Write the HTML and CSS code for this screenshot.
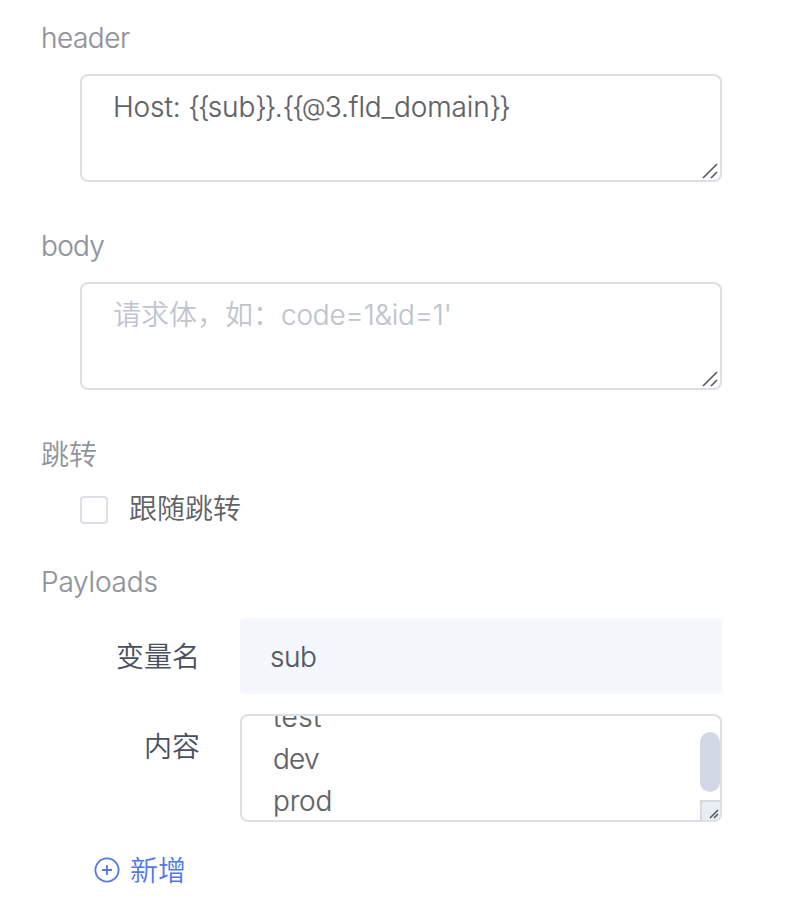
FILE: index.html
```html
<!DOCTYPE html>
<html lang="zh-CN">
<head>
<meta charset="utf-8">
<title>Payloads</title>
<link rel="stylesheet" href="styles.css">
</head>
<body>
<main class="form">
  <section class="group">
    <h2 class="title"><span class="t-header">header</span></h2>
    <div class="area"><span class="t-host">Host: <span class="brace">{{</span>sub<span class="brace">}}</span>.<span class="brace">{{</span><span class="at">@</span>3.fld_domain<span class="brace">}}</span></span>
      <svg class="grip" width="16" height="16" viewBox="0 0 16 16"><path d="M1 15L15 1M9 15L15 9"/></svg>
    </div>
  </section>
  <section class="group">
    <h2 class="title"><span class="t-body">body</span></h2>
    <div class="area placeholder"><span class="cjk">请求体，如：</span><span class="t-code">code=1&amp;id=1'</span>
      <svg class="grip" width="16" height="16" viewBox="0 0 16 16"><path d="M1 15L15 1M9 15L15 9"/></svg>
    </div>
  </section>
  <section class="group group-check">
    <h2 class="title cjk">跳转</h2>
    <label class="check cjk"><span class="box"></span><span>跟随跳转</span></label>
  </section>
  <section class="group">
    <h2 class="title"><span class="t-payloads">Payloads</span></h2>
    <div class="row">
      <div class="name cjk">变量名</div>
      <div class="input"><span class="t-sub">sub</span></div>
    </div>
    <div class="row">
      <div class="name name-content cjk">内容</div>
      <div class="area scroll">
        <div class="lines"><div class="t-test">test</div><div class="t-dev">dev</div><div class="t-prod">prod</div></div>
        <span class="thumb"></span>
        <span class="corner"><svg width="10" height="10" viewBox="0 0 10 10"><path d="M1 9L9 1M5 9L9 5"/></svg></span>
      </div>
    </div>
    <div class="add cjk">
      <svg width="26" height="26" viewBox="0 0 26 26"><circle cx="13" cy="13" r="11.6"/><path d="M13 8v10M8 13h10"/></svg>
      <span>新增</span>
    </div>
  </section>
</main>
</body>
</html>
```

FILE: styles.css
```css
* { box-sizing: border-box; }
body {
  margin: 0;
  background: #fff;
  color: #606266;
  font: 300 28px/42px Inter, "Noto Sans CJK SC", sans-serif;
  -webkit-text-stroke: 0.2px currentColor;
}
.form { height: 914px; padding: 18px 66px 0 40px; overflow: hidden; }
.group { margin-bottom: 44px; }
.group-check { margin-bottom: 32px; }
.title {
  height: 40px;
  margin: 0 0 16px;
  padding-left: 1px;
  font: inherit;
  line-height: 40px;
  color: #909399;
}
.title.cjk { line-height: 42px; }
.cjk, .title.cjk { font-weight: 350; -webkit-text-stroke: 0; }
.area {
  position: relative;
  height: 108px;
  margin-left: 40px;
  padding: 10px 30px 8px 31px;
  border: 2px solid #dcdfe6;
  border-radius: 8px;
  white-space: nowrap;
}
.placeholder { color: #c0c4cc; }
.grip { position: absolute; right: 2px; bottom: 1px; }
.grip path, .corner path { stroke: #56585c; stroke-width: 1.6; fill: none; }
.check { display: flex; align-items: center; height: 40px; padding-left: 40px; line-height: 40px; }
.check span:last-child { position: relative; top: -1px; }
.box {
  width: 28px;
  height: 28px;
  margin-right: 21px;
  border: 2px solid #dcdfe6;
  border-radius: 4px;
}
.row { display: flex; margin-bottom: 20px; }
.name {
  width: 160px;
  height: 76px;
  margin-right: 40px;
  line-height: 78px;
  text-align: right;
  color: #484f60;
}
.name-content { line-height: 66px; }
.input {
  flex: 1;
  height: 76px;
  padding-left: 30px;
  border-radius: 4px;
  background: #f4f7fc;
  line-height: 78px;
  color: #515866;
}
.scroll { flex: 1; margin-left: 0; padding: 0 31px; overflow: hidden; }
.lines { margin-top: -20px; }
.thumb {
  position: absolute;
  top: 16px;
  right: 0;
  width: 20px;
  height: 60px;
  border-radius: 10px;
  background: #d2d8e4;
}
.corner {
  position: absolute;
  right: 0;
  bottom: 0;
  width: 20px;
  height: 20px;
  border: solid #dadada;
  border-width: 2px 0 0 2px;
  background: #e9edf6;
}
.corner svg { position: absolute; right: 1px; bottom: 1px; }
.add {
  display: flex;
  align-items: center;
  height: 40px;
  margin-top: 28px;
  padding-left: 54px;
  gap: 10px;
  line-height: 42px;
  color: #5477e8;
}
.add span { position: relative; top: 1px; }
.add svg { fill: none; stroke: #5477e8; stroke-width: 1.8; }
.t-header, .t-sub { letter-spacing: -0.5px; }
.t-body { letter-spacing: -0.7px; }
.t-dev { letter-spacing: -0.8px; }
.t-host { letter-spacing: -0.12px; }
.brace { letter-spacing: -1.9px; }
.at { position: relative; top: -1px; font-size: 24px; letter-spacing: -0.4px; }
.t-code { letter-spacing: -0.2px; }
.t-payloads { letter-spacing: -0.2px; }
.t-test { letter-spacing: 0.4px; }
.t-prod { letter-spacing: -0.2px; }
```
